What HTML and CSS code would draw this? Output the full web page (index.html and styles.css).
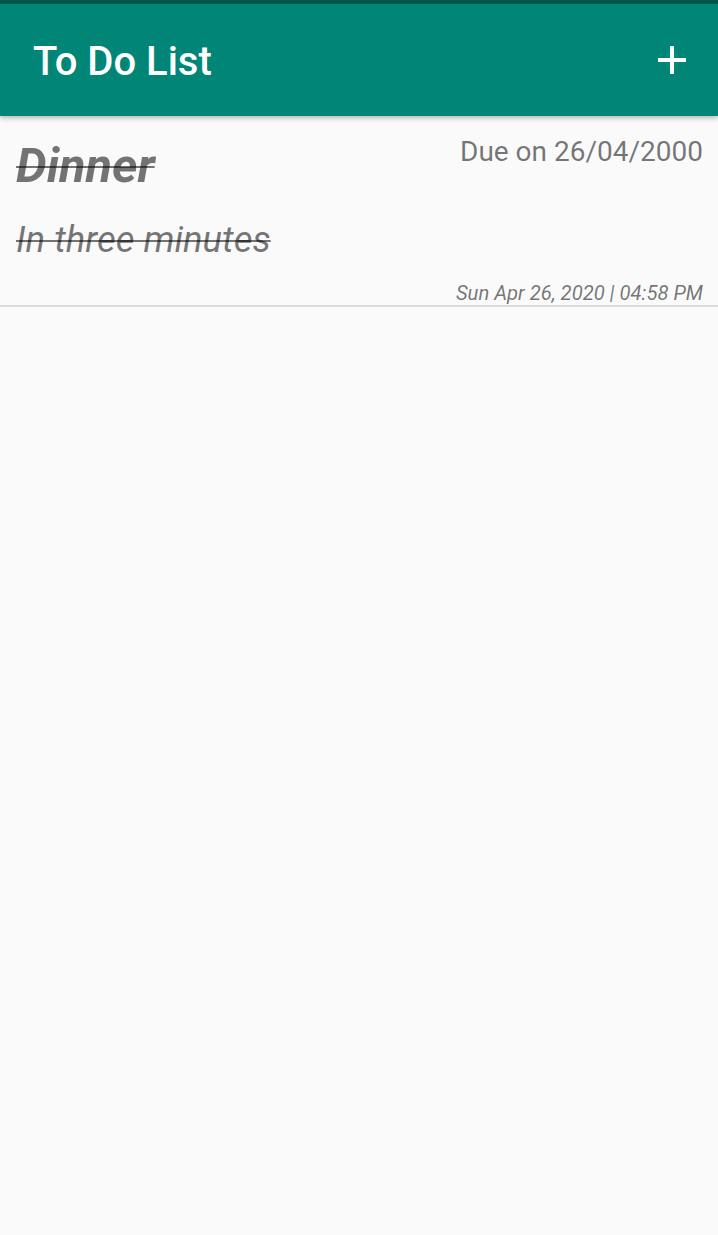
FILE: index.html
```html
<!DOCTYPE html>
<html>
<head>
<meta charset="utf-8">
<link rel="stylesheet" href="styles.css">
</head>
<body>
<div class="statusbar"></div>
<header class="appbar">
  <h1 class="title">To Do List</h1>
  <button class="add" aria-label="Add">
    <svg width="28" height="28" viewBox="0 0 28 28"><path d="M14 0V28M0 14H28" stroke="#fff" stroke-width="4"/></svg>
  </button>
</header>
<main class="list">
  <div class="item">
    <div class="row-top">
      <span class="item-title">Dinner</span>
      <span class="due">Due on 26/04/2000</span>
    </div>
    <div class="desc">In three minutes</div>
    <div class="stamp">Sun Apr 26, 2020 | 04:58 PM</div>
  </div>
</main>
</body>
</html>
```

FILE: styles.css
```css
html, body {
  margin: 0;
  padding: 0;
  background: #fafafa;
  font-family: Roboto, "Noto Sans", sans-serif;
}
.statusbar {
  height: 4px;
  background: #00574b;
}
.appbar {
  height: 112px;
  box-sizing: border-box;
  background: #008577;
  display: flex;
  align-items: center;
  justify-content: space-between;
  padding: 0 32px 0 33px;
  box-shadow: 0 2px 5px rgba(0,0,0,0.28);
  position: relative;
  z-index: 1;
}
.title {
  margin: 3px 0 0 0;
  color: #fff;
  font-size: 40px;
  font-weight: 500;
  line-height: 40px;
}
.add {
  background: none;
  border: 0;
  padding: 0;
  width: 28px;
  height: 28px;
  display: flex;
}
.item {
  padding: 16px 15px 0 16px;
  border-bottom: 2px solid #dcdcdc;
  color: rgba(0,0,0,0.54);
}
.row-top {
  display: flex;
  justify-content: space-between;
  align-items: flex-start;
}
.item-title {
  font-size: 48.6px;
  font-weight: 700;
  font-style: italic;
  text-decoration: line-through;
  text-decoration-thickness: 2px;
  line-height: 67px;
}
.due {
  font-size: 28px;
  line-height: 40px;
}
.desc {
  font-size: 36.5px;
  font-style: italic;
  text-decoration: line-through;
  text-decoration-thickness: 2px;
  line-height: 44px;
  margin-top: 19px;
}
.stamp {
  text-align: right;
  font-size: 20.25px;
  font-style: italic;
  line-height: 24px;
  margin-top: 19px;
}
```
